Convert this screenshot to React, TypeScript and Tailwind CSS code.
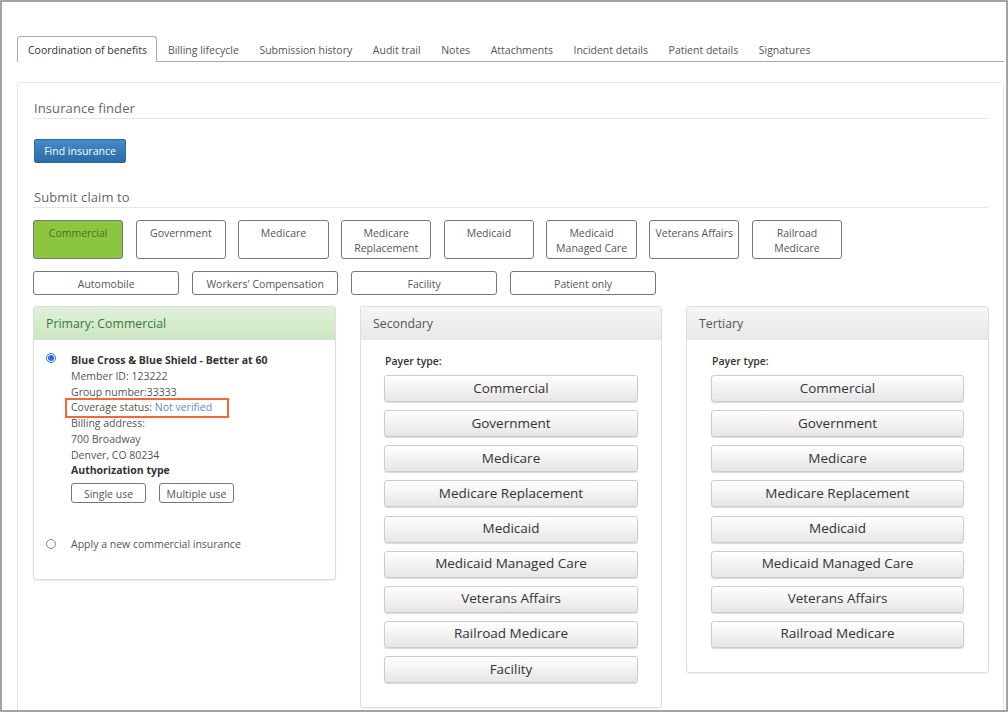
const TABS = [
  "Coordination of benefits",
  "Billing lifecycle",
  "Submission history",
  "Audit trail",
  "Notes",
  "Attachments",
  "Incident details",
  "Patient details",
  "Signatures",
];

const CLAIM_TOP = [
  ["Commercial"],
  ["Government"],
  ["Medicare"],
  ["Medicare", "Replacement"],
  ["Medicaid"],
  ["Medicaid", "Managed Care"],
  ["Veterans Affairs"],
  ["Railroad", "Medicare"],
];

const CLAIM_BOTTOM = ["Automobile", "Workers' Compensation", "Facility", "Patient only"];

const PAYERS = [
  "Commercial",
  "Government",
  "Medicare",
  "Medicare Replacement",
  "Medicaid",
  "Medicaid Managed Care",
  "Veterans Affairs",
  "Railroad Medicare",
];

function SectionTitle({ children }: { children: string }) {
  return (
    <div className="h-[21px] border-b border-[#e5e5e5] pl-px text-[13px] leading-[20px] tracking-[0.1px] text-[#666]">
      {children}
    </div>
  );
}

function PayerPanel({ title, payers, className, bodyClass }: { title: string; payers: string[]; className: string; bodyClass: string }) {
  return (
    <div className={`shrink-0 rounded-[3px] border border-[#ddd] bg-white shadow-[0_1px_1px_rgba(0,0,0,0.05)] ${className}`}>
      <div className="flex h-[33px] items-center bg-gradient-to-b from-[#f5f5f5] to-[#e8e8e8] pl-[12px] pt-[2px] text-[12.3px] font-medium text-[#555]">
        {title}
      </div>
      <div className={`pt-[13px] ${bodyClass}`}>
        <div className="h-[22px] pl-px text-[10.5px] font-semibold leading-[16px] text-[#333]">Payer type:</div>
        <div className="flex flex-col gap-[8.15px]">
          {payers.map((p) => (
            <button
              key={p}
              className="h-[27px] w-full rounded-[3px] border border-[#ccc] bg-gradient-to-b from-[#ffffff] to-[#e6e6e6] pb-[2px] text-[13.5px] leading-[22px] text-[#333] shadow-[0_1px_1px_rgba(0,0,0,0.15)]"
            >
              {p}
            </button>
          ))}
        </div>
      </div>
    </div>
  );
}

export default function App() {
  return (
    <div
      className="h-[712px] w-[1008px] overflow-hidden border-2 border-[#a3a3a3] bg-white pl-[15px] pr-[2px] pt-[34px] text-[10.5px] text-[#555]"
      style={{ fontFamily: '"Open Sans", "Noto Sans", sans-serif' }}
    >
      <div className="flex h-[26px] border-b border-[#aaa]">
        {TABS.map((t, i) => (
          <div
            key={t}
            className={
              i === 0
                ? "mr-[0.7px] h-[26px] rounded-t-[3px] border border-b-0 border-[#aaa] bg-white pl-[10px] pr-[9px] leading-[27px] text-[#333]"
                : "px-[10.3px] leading-[29px] text-[#555]"
            }
          >
            {t}
          </div>
        ))}
      </div>

      <div className="mt-[20px] h-[640px] rounded-[3px] border border-[#e6e6e6] pl-[15px] pr-[15px] pt-[15px]">
        <SectionTitle>Insurance finder</SectionTitle>
        <button className="ml-px mt-[20px] block h-[24px] w-[92px] rounded-[2px] border border-[#2e6da4] bg-gradient-to-b from-[#428bca] to-[#2a6ca6] pt-[2px] text-[10.5px] text-white">
          Find insurance
        </button>
        <div className="mt-[24px]">
          <SectionTitle>Submit claim to</SectionTitle>
        </div>

        <div className="mt-[12px] flex gap-[12.4px]">
          {CLAIM_TOP.map((lines, i) => (
            <button
              key={lines.join(" ")}
              className={`flex h-[39px] w-[90.3px] flex-col items-center justify-start rounded-[3px] border border-[#777] pt-[5px] text-center leading-[15px] ${
                i === 0 ? "bg-[#8cc63f] text-[#4f6b2a]" : "bg-white text-[#555]"
              }`}
            >
              {lines.map((l) => (
                <span key={l}>{l}</span>
              ))}
            </button>
          ))}
        </div>

        <div className="mt-[12px] flex gap-[12.7px]">
          {CLAIM_BOTTOM.map((l) => (
            <button key={l} className="h-[24px] w-[146.3px] rounded-[3px] border border-[#777] bg-white leading-[24px] text-[#555]">
              {l}
            </button>
          ))}
        </div>

        <div className="mt-[11px] flex items-start gap-[24px]">
          <div className="h-[274px] w-[303px] shrink-0 rounded-[3px] border border-[#ddd] bg-white shadow-[0_1px_1px_rgba(0,0,0,0.08)]">
            <div className="flex h-[33px] items-center bg-gradient-to-b from-[#dff0d8] to-[#cde6c3] pl-[12px] pt-[2px] text-[12.3px] font-medium text-[#3c763d]">
              Primary: Commercial
            </div>
            <div className="relative flex pl-[12px] pt-[13px]">
              <span className="flex h-[10px] w-[10px] shrink-0 items-center justify-center rounded-full border border-[#1a73e8]">
                <span className="h-[6px] w-[6px] rounded-full bg-[#1a73e8]" />
              </span>
              <div className="ml-[15px] leading-[15.75px]">
                <div className="font-bold text-[#333]">Blue Cross &amp; Blue Shield - Better at 60</div>
                <div>Member ID: 123222</div>
                <div>Group number:33333</div>
                <div className="relative">
                  Coverage status: <span className="text-[#5b8ccf]">Not verified</span>
                  <span className="absolute left-[-6px] top-[-2px] h-[20px] w-[164px] border-2 border-[#f2683a]" />
                </div>
                <div>Billing address:</div>
                <div>700 Broadway</div>
                <div>Denver, CO 80234</div>
                <div className="font-bold text-[#333]">Authorization type</div>
                <div className="mt-[4px] flex gap-[13px]">
                  <button className="h-[20px] w-[75px] rounded-[3px] border border-[#777] leading-[20px] text-[#555]">Single use</button>
                  <button className="h-[20px] w-[75px] rounded-[3px] border border-[#777] leading-[20px] text-[#555]">Multiple use</button>
                </div>
              </div>
            </div>
            <div className="mt-[33px] flex items-center pl-[12px] leading-[16px]">
              <span className="h-[10px] w-[10px] shrink-0 rounded-full border border-[#888] bg-white" />
              <span className="ml-[15px]">Apply a new commercial insurance</span>
            </div>
          </div>

          <PayerPanel title="Secondary" payers={[...PAYERS, "Facility"]} className="h-[402px] w-[302px]" bodyClass="px-[23px]" />
          <PayerPanel title="Tertiary" payers={PAYERS} className="h-[367px] w-[303px]" bodyClass="px-[24px]" />
        </div>
      </div>
    </div>
  );
}
